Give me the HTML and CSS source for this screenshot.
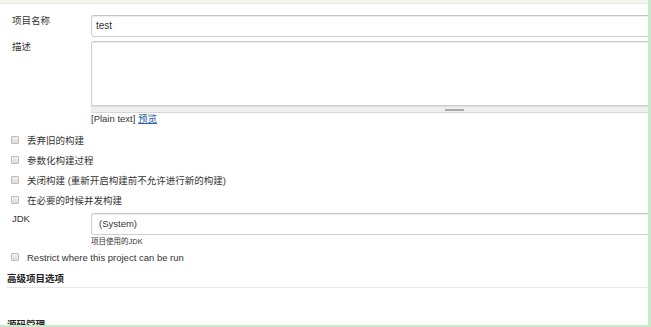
FILE: index.html
```html
<!DOCTYPE html>
<html lang="zh">
<head>
<meta charset="utf-8">
<title>配置</title>
<link rel="stylesheet" href="styles.css">
</head>
<body>
<div class="frame">
  <div class="topbar"></div>
  <div class="form">
    <div class="row row-name">
      <div class="label">项目名称</div>
      <div class="field"><div class="input">test</div></div>
    </div>
    <div class="row row-desc">
      <div class="label">描述</div>
      <div class="field">
        <div class="textarea"></div>
        <div class="grip"><span class="grip-handle"></span></div>
        <div class="preview">[Plain text] <a href="#" class="link">预览</a></div>
      </div>
    </div>
    <div class="checks">
      <div class="check"><span class="cb"></span><span>丢弃旧的构建</span></div>
      <div class="check"><span class="cb"></span><span>参数化构建过程</span></div>
      <div class="check"><span class="cb"></span><span>关闭构建 (重新开启构建前不允许进行新的构建)</span></div>
      <div class="check"><span class="cb"></span><span>在必要的时候并发构建</span></div>
    </div>
    <div class="row row-jdk">
      <div class="label">JDK</div>
      <div class="field">
        <div class="select">(System)</div>
        <div class="help">项目使用的JDK</div>
      </div>
    </div>
    <div class="check"><span class="cb"></span><span>Restrict where this project can be run</span></div>
    <div class="section">高级项目选项</div>
    <div class="section section-next">源码管理</div>
  </div>
</div>
</body>
</html>
```

FILE: styles.css
```css
* { box-sizing: border-box; }

html, body {
  margin: 0;
  padding: 0;
  background: #fff;
}

body {
  font-family: "Liberation Sans", Arial, "Noto Sans CJK SC", sans-serif;
  font-size: 9.5px;
  color: #333;
}

.frame {
  width: 651px;
  height: 327px;
  overflow: hidden;
  border-right: 3px solid #c6ebc8;
  border-bottom: 2px solid #c6ebc8;
}

.topbar {
  height: 4px;
  background: #f4f5ec;
  border-bottom: 1px solid #e9eae2;
}

.form {
  display: flex;
  flex-direction: column;
}

.row {
  display: grid;
  grid-template-columns: 91px 727px;
}

.label {
  padding-left: 12px;
  line-height: 12px;
}

.row-name { margin-top: 11px; }
.row-name .label { padding-top: 0; }

.row-desc { margin-top: 4px; }
.row-desc .label { padding-top: 0; }

.input,
.select,
.textarea {
  border: 1px solid #cfcfcf;
  border-top-color: #c4c4c4;
  border-radius: 3px;
  background: #fff;
  box-shadow: inset 0 1px 1px rgba(0, 0, 0, 0.07);
}

.input {
  height: 22px;
  line-height: 20px;
  padding-left: 4px;
  font-size: 10px;
  color: #333;
}

.textarea {
  height: 65px;
  border-radius: 3px 3px 0 0;
}

.grip {
  height: 7px;
  background: #efefef;
  border-top: 1px solid #dedede;
  border-bottom: 1px solid #d8d8d8;
  display: flex;
  justify-content: center;
  align-items: center;
}

.grip-handle {
  width: 19px;
  height: 2px;
  background: #a9a9a9;
}

.preview {
  line-height: 11px;
  color: #333;
}

.link {
  color: #2c5ea8;
  text-decoration: underline;
}

.checks {
  margin-top: 6px;
  display: flex;
  flex-direction: column;
}

.check {
  height: 20px;
  display: flex;
  align-items: center;
  padding-left: 11px;
}

.cb {
  width: 8px;
  height: 8px;
  margin-right: 8px;
  border: 1px solid #bcbcbc;
  border-radius: 1px;
  background: linear-gradient(#f2f2f2, #dcdcdc);
  flex: none;
}

.row-jdk { margin-top: 3px; }
.row-jdk .label { padding-top: 0; }

.select {
  height: 22px;
  line-height: 20px;
  padding-left: 7px;
  font-size: 9.5px;
}

.help {
  margin-top: 2px;
  line-height: 10px;
  font-size: 7.5px;
  color: #333;
}

.section {
  margin: 6px 0 0 7px;
  padding-bottom: 2px;
  line-height: 12px;
  font-weight: bold;
  color: #222;
  border-bottom: 1px solid #e6e6e6;
}

.section-next {
  margin-top: 31px;
  border-bottom: none;
}
```
